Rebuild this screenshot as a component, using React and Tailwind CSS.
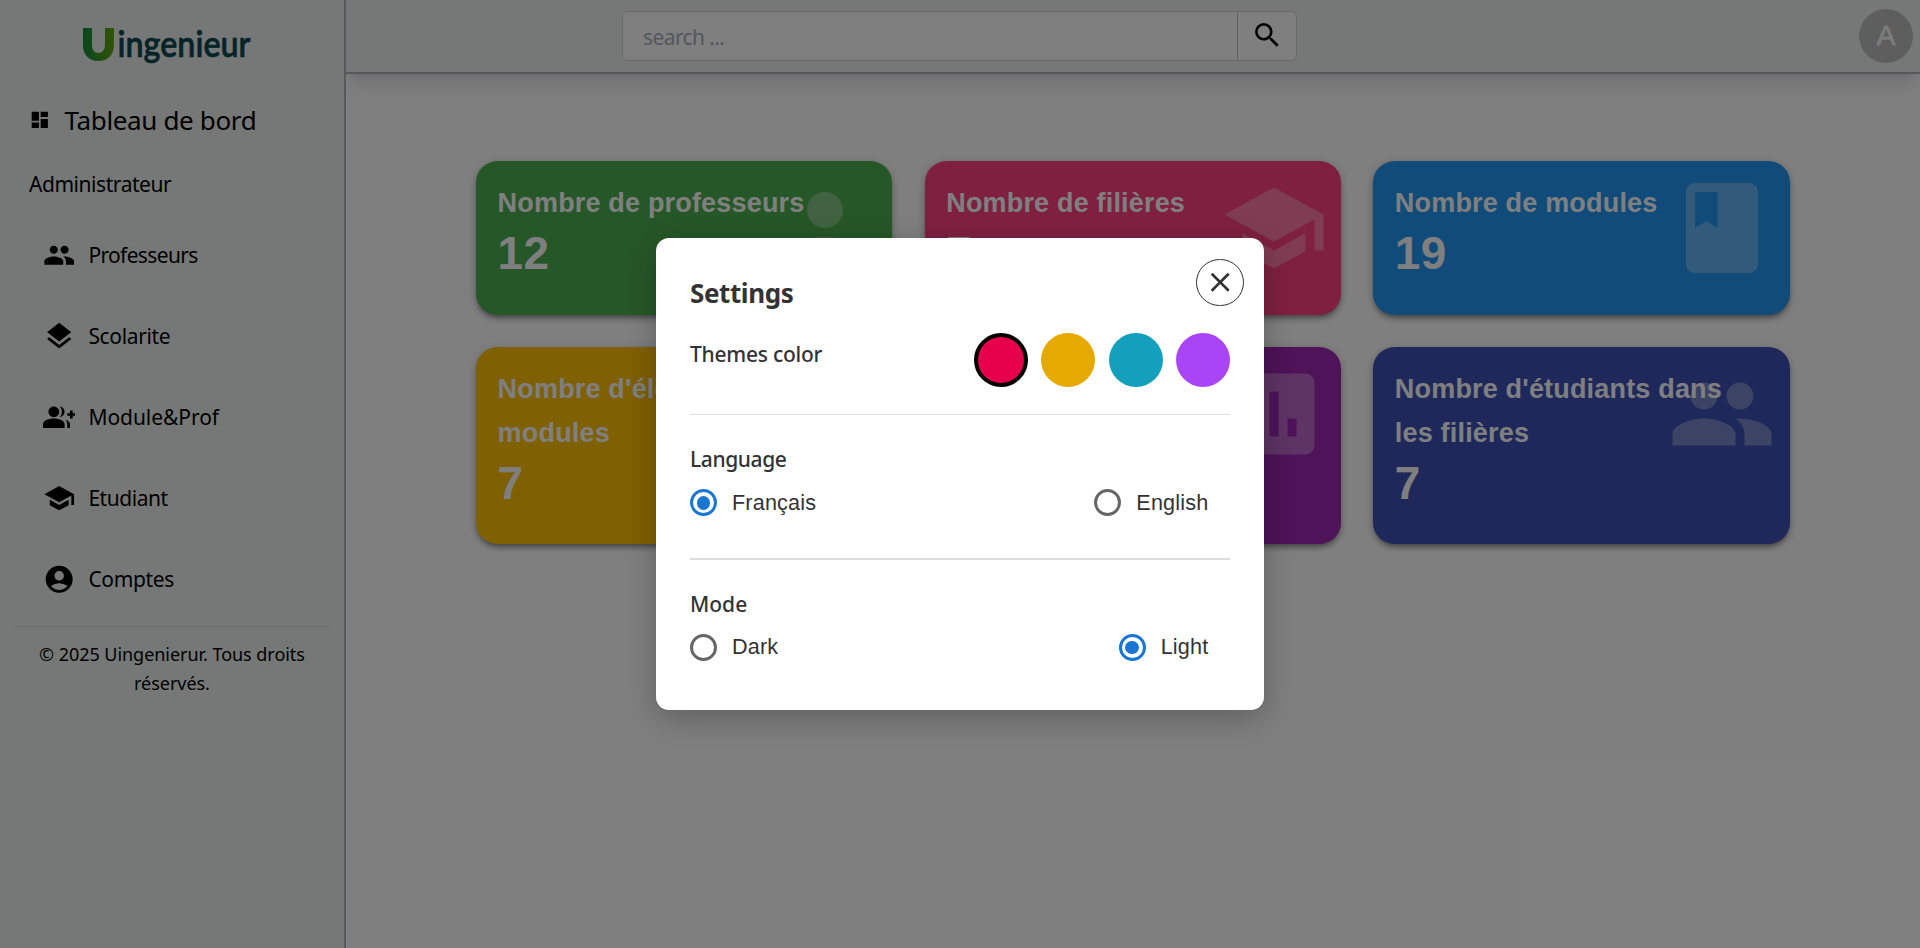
import React from "react";
import {
  MdDashboard, MdPeople, MdLayers, MdSchool, MdAccountCircle, MdSearch,
  MdPerson, MdBook, MdAssessment, MdClose, MdLibraryBooks,
} from "react-icons/md";

const arial = "font-['Liberation_Sans',sans-serif]";

function GroupAdd({ className }) {
  return (
    <svg viewBox="0 0 24 24" fill="currentColor" className={className}>
      <path d="M22 9V7h-2v2h-2v2h2v2h2v-2h2V9z" />
      <path d="M8 12c2.21 0 4-1.79 4-4s-1.79-4-4-4-4 1.79-4 4 1.79 4 4 4zm0 1c-2.67 0-8 1.34-8 4v3h16v-3c0-2.66-5.33-4-8-4zm4.51-8.95C13.43 5.11 14 6.49 14 8s-.57 2.89-1.49 3.95C14.47 11.7 16 10.04 16 8s-1.53-3.7-3.49-3.95zm4.02 9.78C17.42 14.66 18 15.7 18 17v3h2v-3c0-1.45-1.59-2.51-3.47-3.17z" />
    </svg>
  );
}

function Logo() {
  return (
    <svg width="190" height="60" viewBox="0 -6 190 60" className="block overflow-visible">
      <defs>
        <linearGradient id="leaf" x1="0" y1="0" x2="1" y2="0">
          <stop offset="0" stopColor="#128c3c" />
          <stop offset="1" stopColor="#66a80c" />
        </linearGradient>
      </defs>
      <path
        d="M0 4H9V20.5C9 26 11.5 29 15.5 29S22 26 22 20.5V4H31V21C31 31 25 37 15.5 37S0 31 0 21Z"
        fill="url(#leaf)"
      />
      <text
        x="34.5" y="33" fill="#0c4650" fontSize="37" fontWeight="600"
        textLength="133" lengthAdjust="spacingAndGlyphs"
        stroke="#0c4650" strokeWidth="0.6"
        className="font-['Lato',sans-serif]"
      >
        ingenieur
      </text>
    </svg>
  );
}

const nav = [
  { label: "Professeurs", Icon: MdPeople, tracking: "tracking-[-0.65px]" },
  { label: "Scolarite", Icon: MdLayers, tracking: "tracking-[-0.35px]" },
  { label: "Module&Prof", Icon: GroupAdd, tracking: "tracking-[-0.05px]" },
  { label: "Etudiant", Icon: MdSchool, tracking: "tracking-[-0.45px]" },
  { label: "Comptes", Icon: MdAccountCircle, tracking: "tracking-[-0.35px]" },
];

function Sidebar() {
  return (
    <aside className="relative z-10 flex w-[346px] shrink-0 flex-col border-r-2 border-[#acb0b8] bg-[#ebf0ed] text-black">
      <div className="flex h-[72px] items-start pt-[18px] pl-[83px]">
        <Logo />
      </div>
      <div className="mt-[24px] flex h-[48px] items-center pl-[29px]">
        <MdDashboard className="size-[21.6px]" />
        <span className="ml-[14px] text-[26px] tracking-[-0.36px]">Tableau de bord</span>
      </div>
      <div className="mt-[17px] flex h-[48px] items-center pl-[29px] text-[21px] tracking-[-0.45px]">Administrateur</div>
      <nav className="mt-[6px] flex flex-col">
        {nav.map(({ label, Icon, tracking }) => (
          <div key={label} className="flex h-[81px] items-center pl-[43px]">
            <Icon className="size-[32.4px]" />
            <span className={`ml-[13px] text-[21px] ${tracking}`}>{label}</span>
          </div>
        ))}
      </nav>
      <div className="mx-[14px] mt-[6px] border-t border-[#d8dcda] pt-[13px] text-center text-[18px] leading-[29px] tracking-[-0.04px]">
        <p>© 2025 Uingenierur. Tous droits</p>
        <p>réservés.</p>
      </div>
    </aside>
  );
}

function Header() {
  return (
    <header className="flex h-[74px] shrink-0 items-center border-b-2 border-[#acb0b8] bg-[#ebf0ed] shadow-[0_13px_20px_-4px_rgba(0,0,0,0.12),0_5px_8px_-5px_rgba(0,0,0,0.12)]">
      <div className="ml-[276px] flex h-[50px] w-[675px] rounded-[6px] border border-[#d3d3d3] bg-white">
        <div className="flex flex-1 items-center border-r border-[#c0c0c0] pt-[3px] pl-[20px] text-[21px] tracking-[-0.6px] text-[#a8aebb]">search ...</div>
        <div className="flex w-[58px] items-center pb-[2px] pl-[13px] text-black">
          <MdSearch className="size-[32.4px]" />
        </div>
      </div>
      <div className={`mr-[7px] ml-auto flex size-[54px] items-center justify-center rounded-full bg-[#bdbdbd] text-[28px] text-[#f8f8f8] [-webkit-text-stroke:0.7px_#f8f8f8] ${arial}`}>A</div>
    </header>
  );
}

const cards = [
  { title: "Nombre de professeurs", value: 12, bg: "bg-[#4caf50]", Icon: MdPerson },
  { title: "Nombre de filières", value: 7, bg: "bg-[#ff4081]", Icon: MdSchool },
  { title: "Nombre de modules", value: 19, bg: "bg-[#2196f3]", Icon: MdBook },
  { title: "Nombre d'éléments de modules", value: 7, bg: "bg-[#ffc107]", Icon: MdLibraryBooks },
  { title: "Nombre de notes", value: 5, bg: "bg-[#9c27b0]", Icon: MdAssessment },
  { title: "Nombre d'étudiants dans les filières", value: 7, bg: "bg-[#3f51b5]", Icon: MdPeople },
];

function Card({ title, value, bg, Icon }) {
  return (
    <div className={`relative rounded-[21.6px] px-[21.6px] pt-[20px] pb-[32px] text-white ${bg} ${arial} shadow-[0_4px_4px_-2px_rgba(0,0,0,0.25),0_4px_6px_rgba(0,0,0,0.2),0_1px_11px_rgba(0,0,0,0.14)]`}>
      <h6 className="pr-[20px] text-[27px] leading-[44px] font-bold tracking-[0.18px]">{title}</h6>
      <p className="text-[45.9px] leading-[56px] font-bold tracking-[0.3px]">{value}</p>
      <Icon className="absolute top-[13px] right-[13.2px] size-[108px] opacity-30" />
    </div>
  );
}

const swatches = ["bg-[#e6004c] border-4 border-black", "bg-[#e4aa00]", "bg-[#14a0bc]", "bg-[#a944f7]"];

function Radio({ label, checked }) {
  return (
    <label className={`flex items-center gap-[15px] text-[21.6px] tracking-[0.18px] ${arial}`}>
      <span className={`flex size-[27px] items-center justify-center rounded-full border-3 ${checked ? "border-[#1976d2]" : "border-[#666666]"}`}>
        {checked && <span className="size-[13.5px] rounded-full bg-[#1976d2]" />}
      </span>
      {label}
    </label>
  );
}

function Settings() {
  return (
    <div className="absolute inset-0 z-20 flex items-center justify-center bg-black/50">
      <div className="relative h-[472px] w-[608px] rounded-[13px] bg-white p-[34px] text-[#333333] shadow-[0_8px_30px_rgba(0,0,0,0.25)]">
        <button className="absolute top-[21px] right-[20px] flex h-[47px] w-[48px] items-center justify-center rounded-full border border-[#333333]">
          <MdClose className="size-[32.4px] shrink-0" />
        </button>
        <h2 className="h-[42px] text-[26px] leading-[42px] font-bold tracking-[-0.4px]">Settings</h2>
        <div className="mt-[19px] flex items-start justify-between">
          <span className="text-[21px] leading-[43px] font-medium tracking-[-0.25px]">Themes color</span>
          <div className="flex gap-[13.5px]">
            {swatches.map((c) => (
              <span key={c} className={`size-[54px] rounded-full ${c}`} />
            ))}
          </div>
        </div>
        <hr className="mt-[27px] border-t border-[#dddddd]" />
        <h3 className="mt-[29px] text-[21px] leading-[31px] font-medium tracking-[-0.4px]">Language</h3>
        <div className="-mt-px flex h-[58px] items-center justify-between pr-[21.6px]">
          <Radio label="Français" checked />
          <Radio label="English" />
        </div>
        <hr className="mt-[26px] border-t-2 border-[#dddddd]" />
        <h3 className="mt-[29px] text-[21px] leading-[31px] font-medium">Mode</h3>
        <div className="-mt-px flex h-[57px] items-center justify-between pr-[21.6px]">
          <Radio label="Dark" />
          <Radio label="Light" checked />
        </div>
      </div>
    </div>
  );
}

export default function App() {
  return (
    <div className="relative flex h-[948px] w-[1920px] overflow-hidden bg-white font-['Noto_Sans',sans-serif]">
      <Sidebar />
      <div className="flex min-w-0 flex-1 flex-col">
        <Header />
        <main className="grid grid-cols-3 grid-rows-[154px_197px] gap-x-[32.4px] gap-y-[32px] pt-[87px] pr-[130.5px] pl-[130px]">
          {cards.map((c) => (
            <Card key={c.title} {...c} />
          ))}
        </main>
      </div>
      <Settings />
    </div>
  );
}
